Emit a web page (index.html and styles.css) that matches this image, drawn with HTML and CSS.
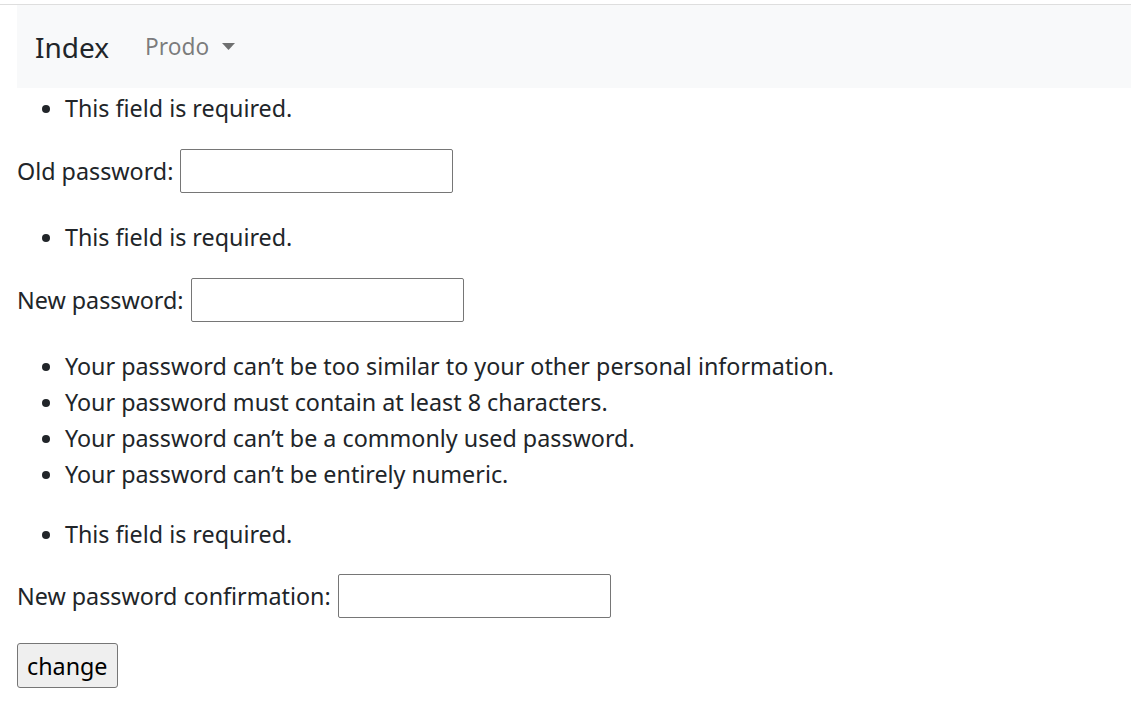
FILE: index.html
```html
<!DOCTYPE html>
<html lang="en">
<head>
<meta charset="utf-8">
<title>Password change</title>
<link rel="stylesheet" href="styles.css">
</head>
<body>
<div class="page">
  <nav class="navbar">
    <a class="brand" href="#">Index</a>
    <a class="dropdown" href="#">Prodo <svg class="caret" width="13" height="7" viewBox="0 0 13 7"><path d="M0 0H13L6.5 7Z" fill="#6f7070"/></svg></a>
  </nav>
  <form class="form">
    <ul class="errorlist"><li>This field is required.</li></ul>
    <div class="row"><label>Old password:</label><input type="password" class="field"></div>
    <ul class="errorlist"><li>This field is required.</li></ul>
    <div class="row"><label>New password:</label><input type="password" class="field"></div>
    <ul class="helplist">
      <li>Your password can’t be too similar to your other personal information.</li>
      <li>Your password must contain at least 8 characters.</li>
      <li>Your password can’t be a commonly used password.</li>
      <li>Your password can’t be entirely numeric.</li>
    </ul>
    <ul class="errorlist"><li>This field is required.</li></ul>
    <div class="row row-last"><label>New password confirmation:</label><input type="password" class="field"></div>
    <button type="button" class="btn">change</button>
  </form>
</div>
</body>
</html>
```

FILE: styles.css
```css
html, body {
  margin: 0;
  padding: 0;
  background: #fff;
}
body {
  padding-top: 4px;
  font-family: "Noto Sans", "Noto Sans CJK KR", sans-serif;
  color: #212529;
}
.page {
  border-top: 1px solid #dedede;
  padding-left: 17px;
}
.navbar {
  height: 83px;
  background: #f8f9fa;
  display: flex;
  align-items: center;
  padding-left: 18px;
}
.brand {
  font-size: 28px;
  color: #212529;
  text-decoration: none;
}
.dropdown {
  margin-left: 36px;
  font-size: 22.7px;
  color: rgba(0, 0, 0, 0.52);
  text-decoration: none;
  display: flex;
  align-items: center;
}
.caret {
  margin-left: 13px;
}
.form {
  font-size: 23.3px;
  line-height: 36px;
}
.errorlist, .helplist {
  margin: 0;
  padding-left: 48px;
}
.errorlist {
  margin-top: 2px;
}
.row {
  display: flex;
  align-items: center;
  gap: 7px;
  margin: 23px 0 26px;
}
.row-last {
  margin-top: 22px;
  margin-bottom: 25px;
}
.field {
  width: 273px;
  height: 44px;
  box-sizing: border-box;
  border: 1px solid #767676;
  border-radius: 2px;
  margin: 0;
}
.helplist {
  margin-top: 4px;
  margin-bottom: 24px;
}
.btn {
  height: 45px;
  padding: 0 9px;
  font-family: inherit;
  font-size: 23.3px;
  background: #efefef;
  border: 1px solid #767676;
  border-radius: 3px;
  color: #000;
}
```
